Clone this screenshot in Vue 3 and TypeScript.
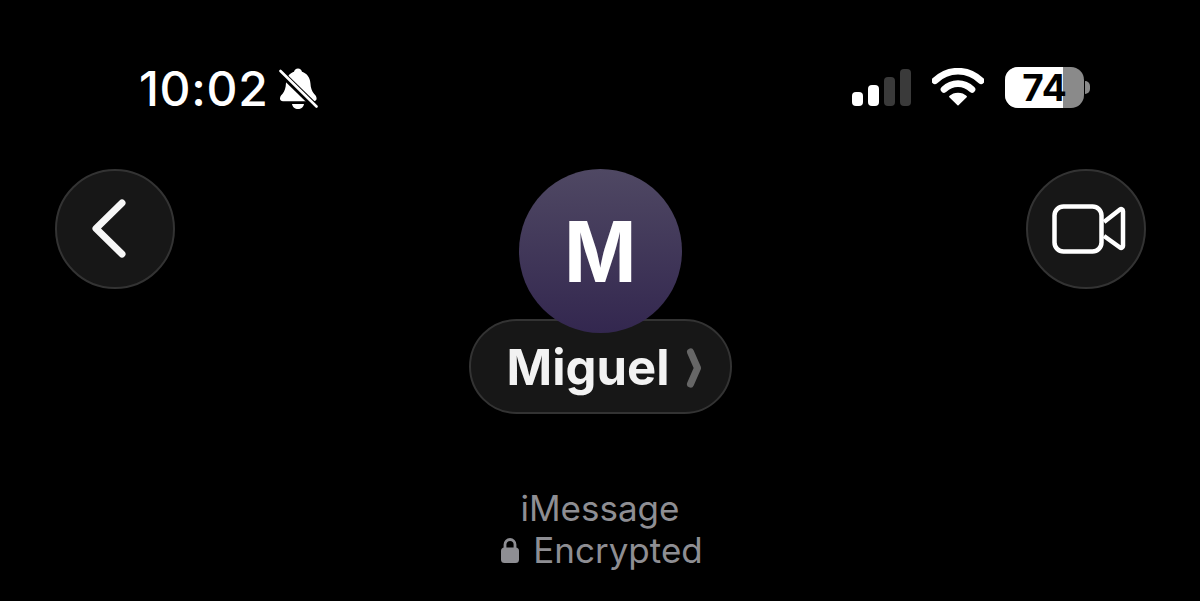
<template>
  <div class="screen">
    <header class="status-bar">
      <div class="status-left">
        <span class="time">10:02</span>
        <svg class="bell" width="40" height="42" viewBox="0 0 40 42">
          <path d="M19 .5c2.200 0 3.600 1.400 4 3.200 5 1.500 8 5.900 8.400 11.300.3 4.800 1.400 8.400 3.800 11 1.400 1.500 2.400 2.600 2.400 4.400 0 1.700-1.300 2.800-3 2.800H4c-1.700 0-3-1.100-3-2.800 0-1.800 1-2.900 2.400-4.400 2.400-2.600 3.300-6.200 3.600-11 .4-5.400 3-9.800 8-11.300C15.400 1.900 16.800.5 19 .5z" fill="#fff" />
          <path d="M13 36h12c-.4 3-3 5-6 5s-5.600-2-6-5z" fill="#fff" />
          <path d="M0 3l38 37" stroke="#000" stroke-width="6.500" fill="none" />
          <path d="M1.500 3l36 35.500" stroke="#fff" stroke-width="2.600" stroke-linecap="round" fill="none" />
        </svg>
      </div>
      <div class="status-right">
        <div class="signal">
          <i v-for="bar in signalBars" :key="bar.height" :class="{ off: bar.off }" :style="{ height: bar.height + 'px' }"></i>
        </div>
        <svg class="wifi" width="52" height="38" viewBox="0 0 54 38">
          <path d="M3 12.500C9.500 6.300 17.800 2.600 27 2.600s17.500 3.700 24 9.900" stroke="#fff" stroke-width="7" stroke-linecap="round" fill="none" />
          <path d="M12.500 21.500C16.300 17.800 21.400 15.500 27 15.500s10.700 2.300 14.500 6" stroke="#fff" stroke-width="7" stroke-linecap="round" fill="none" />
          <path d="M27 37.500 18.500 29c2.200-2.100 5.200-3.300 8.500-3.300s6.300 1.200 8.500 3.300z" fill="#fff" stroke="#fff" stroke-width="1.500" stroke-linejoin="round" />
        </svg>
        <div class="battery">
          <div class="battery-body">
            <div class="battery-fill" :style="{ width: level + '%' }"></div>
            <span class="battery-text">{{ level }}</span>
          </div>
          <div class="battery-cap"></div>
        </div>
      </div>
    </header>

    <nav class="nav-row">
      <button type="button" class="round-btn">
        <svg class="back-icon" width="42" height="62" viewBox="0 0 42 62">
          <path d="M33 5 7 30.500 33 56" stroke="#f7f7f7" stroke-width="7" stroke-linecap="round" stroke-linejoin="round" fill="none" />
        </svg>
      </button>
      <div class="contact">
        <div class="avatar"><span>M</span></div>
        <div class="name-pill">
          <span class="name">Miguel</span>
          <svg class="chevron" width="16" height="40" viewBox="0 0 16 40">
            <path d="M4.500 4 11.500 20 4.500 36" stroke="#666" stroke-width="7" stroke-linecap="round" stroke-linejoin="round" fill="none" />
          </svg>
        </div>
      </div>
      <button type="button" class="round-btn">
        <svg class="video-icon" width="76" height="52" viewBox="0 0 76 52">
          <rect x="3.500" y="3.500" width="47" height="45" rx="9" stroke="#fff" stroke-width="4.500" fill="none" />
          <path d="M53 19 69 6.500c1.300-1 3-.3 3 1.400v35.200c0 1.700-1.700 2.400-3 1.400L53 33" stroke="#fff" stroke-width="4.500" stroke-linejoin="round" fill="none" />
        </svg>
      </button>
    </nav>

    <footer class="service">
      <div>iMessage</div>
      <div class="encrypted">
        <svg width="18" height="26" viewBox="0 0 18 26">
          <path d="M4 12V7.500a5 5 0 0 1 10 0V12" stroke="#8e8e93" stroke-width="2.800" fill="none" />
          <rect x="0" y="10.500" width="18" height="15.500" rx="3.500" fill="#8e8e93" />
        </svg>
        <span>Encrypted</span>
      </div>
    </footer>
  </div>
</template>

<script setup lang="ts">
const level = 74;

const signalBars = [
  { height: 14, off: false },
  { height: 21, off: false },
  { height: 29, off: true },
  { height: 37, off: true }
];
</script>

<style scoped>
.screen {
  width: 1200px;
  height: 601px;
  background: #000;
  color: #fff;
  font-family: Inter, "Liberation Sans", sans-serif;
  overflow: hidden;
  display: flex;
  flex-direction: column;
}

.status-bar {
  height: 44px;
  margin-top: 67px;
  padding: 0 110px 0 139px;
  display: flex;
  align-items: center;
  justify-content: space-between;
}

.status-left {
  display: flex;
  align-items: center;
  gap: 10px;
}

.time {
  font-size: 48px;
  font-weight: 550;
  line-height: 44px;
  letter-spacing: 0.7px;
}

.status-right {
  display: flex;
  align-items: center;
  padding-bottom: 4px;
}

.signal {
  display: flex;
  align-items: flex-end;
  gap: 5px;
  height: 37px;
  margin-right: 21px;
}

.signal i {
  width: 11px;
  border-radius: 4px;
  background: #fff;
}

.signal i.off {
  background: #3a3a3a;
}

.wifi {
  margin-right: 21px;
}

.battery {
  display: flex;
  align-items: center;
  gap: 1px;
}

.battery-body {
  position: relative;
  width: 79px;
  height: 41px;
  border-radius: 13px;
  background: #8a8a8a;
  display: flex;
  align-items: center;
  justify-content: center;
}

.battery-fill {
  position: absolute;
  left: 0;
  top: 0;
  bottom: 0;
  border-radius: 13px 0 0 13px;
  background: #fff;
}

.battery-text {
  position: relative;
  color: #000;
  font-size: 37px;
  font-weight: 700;
  line-height: 37px;
}

.battery-cap {
  width: 5px;
  height: 13px;
  border-radius: 0 5px 5px 0;
  background: #8a8a8a;
}

.nav-row {
  margin-top: 58px;
  padding: 0 54px 0 55px;
  display: flex;
  justify-content: space-between;
  align-items: flex-start;
}

.round-btn {
  width: 120px;
  height: 120px;
  padding: 0;
  border-radius: 50%;
  border: 2px solid #333;
  background: #171717;
  display: flex;
  align-items: center;
  justify-content: center;
}

.back-icon {
  margin-right: 10px;
}

.video-icon {
  margin-left: 6px;
}

.contact {
  display: flex;
  flex-direction: column;
  align-items: center;
}

.avatar {
  position: relative;
  z-index: 1;
  width: 163px;
  height: 164px;
  border-radius: 50%;
  background: linear-gradient(#4f4863, #33274f);
  display: flex;
  align-items: center;
  justify-content: center;
  font-size: 84px;
  font-weight: 700;
}

.avatar span {
  transform: scaleX(0.92);
}

.name-pill {
  width: 263px;
  height: 95px;
  margin-top: -14px;
  padding-left: 8px;
  padding-top: 2px;
  box-sizing: border-box;
  border-radius: 48px;
  border: 2px solid #333;
  background: #171717;
  display: flex;
  align-items: center;
  justify-content: center;
  gap: 17px;
}

.name {
  font-size: 49px;
  font-weight: 700;
  color: #f2f2f2;
}

.service {
  margin-top: 73px;
  display: flex;
  flex-direction: column;
  align-items: center;
  color: #8e8e93;
  font-size: 35px;
  line-height: 42px;
}

.encrypted {
  display: flex;
  align-items: center;
  gap: 14px;
  padding-left: 4px;
}
</style>
